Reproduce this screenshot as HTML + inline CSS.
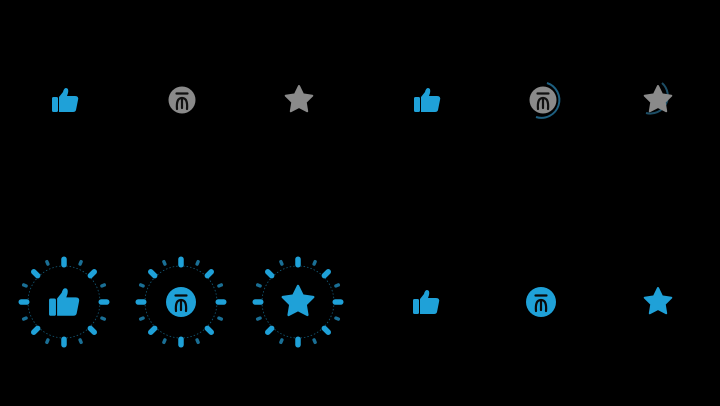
<!DOCTYPE html>
<html><head><meta charset="utf-8"><style>html,body{margin:0;background:#000;width:720px;height:406px;overflow:hidden}</style></head>
<body>
<svg width="720" height="406" viewBox="0 0 720 406" xmlns="http://www.w3.org/2000/svg">
<defs>
<g id="thumb">
<rect x="-13" y="-3" width="6" height="15" rx="1.5"/>
<path d="M-6,-3 L-2,-8 Q-1,-12 1,-12 Q4,-12 3,-7 L2,-4 L10,-4 Q14,-4 13,0 L11,10 Q10.5,12 8,12 L-6,12 Z"/>
</g>
<g id="coinglyph" fill="none" stroke-width="2.2" stroke-linecap="round">
<path d="M-5.5,-6.5 H5.5"/>
<path d="M0,-2 V8"/>
<path d="M-5,9 Q-6,-2 0,-2 Q6,-2 5,9"/>
</g>
<path id="star" d="M0,-14 L4.1,-5.6 L13.3,-4.3 L6.7,2.2 L8.2,11.3 L0,7 L-8.2,11.3 L-6.7,2.2 L-13.3,-4.3 L-4.1,-5.6 Z" stroke-linejoin="round" stroke-width="2"/>
<g id="burst">
<circle r="36" fill="none" stroke="#135a78" stroke-width="0.8" stroke-dasharray="1.5 2"/>
<g fill="#1fa1d8">
<rect x="-2.75" y="-45.5" width="5.5" height="11" rx="2.75"/>
<rect x="-2.75" y="-45.5" width="5.5" height="11" rx="2.75" transform="rotate(45)"/>
<rect x="-2.75" y="-45.5" width="5.5" height="11" rx="2.75" transform="rotate(90)"/>
<rect x="-2.75" y="-45.5" width="5.5" height="11" rx="2.75" transform="rotate(135)"/>
<rect x="-2.75" y="-45.5" width="5.5" height="11" rx="2.75" transform="rotate(180)"/>
<rect x="-2.75" y="-45.5" width="5.5" height="11" rx="2.75" transform="rotate(225)"/>
<rect x="-2.75" y="-45.5" width="5.5" height="11" rx="2.75" transform="rotate(270)"/>
<rect x="-2.75" y="-45.5" width="5.5" height="11" rx="2.75" transform="rotate(315)"/>
</g>
<g fill="#1a6f95">
<rect x="-1.7" y="-45.5" width="3.4" height="6" rx="1.7" transform="rotate(23)"/>
<rect x="-1.7" y="-45.5" width="3.4" height="6" rx="1.7" transform="rotate(-23)"/>
<rect x="-1.7" y="-45.5" width="3.4" height="6" rx="1.7" transform="rotate(67)"/>
<rect x="-1.7" y="-45.5" width="3.4" height="6" rx="1.7" transform="rotate(113)"/>
<rect x="-1.7" y="-45.5" width="3.4" height="6" rx="1.7" transform="rotate(157)"/>
<rect x="-1.7" y="-45.5" width="3.4" height="6" rx="1.7" transform="rotate(203)"/>
<rect x="-1.7" y="-45.5" width="3.4" height="6" rx="1.7" transform="rotate(247)"/>
<rect x="-1.7" y="-45.5" width="3.4" height="6" rx="1.7" transform="rotate(293)"/>
</g>
</g>
</defs>
<!-- row 1 -->
<use href="#thumb" x="65" y="100" fill="#1fa1d8"/>
<circle cx="182" cy="100" r="13.5" fill="#8a8a8a"/>
<use href="#coinglyph" x="182" y="100" stroke="#111"/>
<use href="#star" x="299" y="100" fill="#8a8a8a" stroke="#8a8a8a"/>
<use href="#thumb" x="427" y="100" fill="#1fa1d8"/>
<path d="M547,83 A17.5,17.5 0 0 1 536,117" fill="none" stroke="#1d5f80" stroke-width="2"/>
<circle cx="543" cy="100" r="13.5" fill="#8a8a8a"/>
<use href="#coinglyph" x="543" y="100" stroke="#111"/>
<path d="M662,83 A17.5,17.5 0 0 1 646,113" fill="none" stroke="#1d4e66" stroke-width="2"/>
<use href="#star" x="658" y="100" fill="#8a8a8a" stroke="#8a8a8a"/>
<!-- row 2 -->
<use href="#burst" x="64" y="302"/>
<g transform="translate(64 302) scale(1.15)" fill="#1fa1d8"><use href="#thumb"/></g>
<use href="#burst" x="181" y="302"/>
<circle cx="181" cy="302" r="15" fill="#1fa1d8"/>
<use href="#coinglyph" x="181" y="302" stroke="#0a0a0a"/>
<use href="#burst" x="298" y="302"/>
<g transform="translate(298 302) scale(1.15)" fill="#1fa1d8" stroke="#1fa1d8"><use href="#star"/></g>
<use href="#thumb" x="426" y="302" fill="#1fa1d8"/>
<circle cx="541" cy="302" r="15" fill="#1fa1d8"/>
<use href="#coinglyph" x="541" y="302" stroke="#0a0a0a"/>
<use href="#star" x="658" y="302" fill="#1fa1d8" stroke="#1fa1d8"/>
</svg>
</body></html>
